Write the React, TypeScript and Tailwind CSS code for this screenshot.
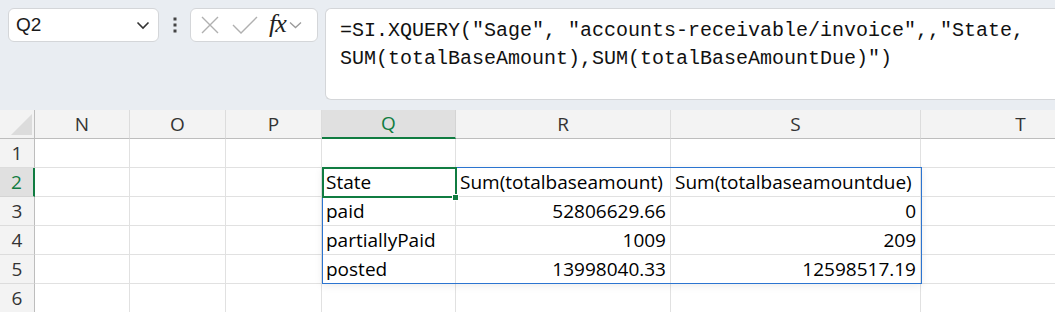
import React from "react";

const cols = [
  { k: "N", w: 95 },
  { k: "O", w: 96 },
  { k: "P", w: 96 },
  { k: "Q", w: 134 },
  { k: "R", w: 215 },
  { k: "S", w: 250 },
  { k: "T", w: 200 },
];

type Cell = { t: string; right?: boolean };
const data: Record<number, Record<string, Cell>> = {
  2: { Q: { t: "State" }, R: { t: "Sum(totalbaseamount)" }, S: { t: "Sum(totalbaseamountdue)" } },
  3: { Q: { t: "paid" }, R: { t: "52806629.66", right: true }, S: { t: "0", right: true } },
  4: { Q: { t: "partiallyPaid" }, R: { t: "1009", right: true }, S: { t: "209", right: true } },
  5: { Q: { t: "posted" }, R: { t: "13998040.33", right: true }, S: { t: "12598517.19", right: true } },
};

const cellFont = { fontFamily: '"Open Sans", "Liberation Sans", sans-serif' };

export default function App() {
  return (
    <div className="w-[1055px] h-[312px] overflow-hidden bg-white" style={cellFont}>
      {/* formula bar */}
      <div className="h-[110px] bg-[#e9edf2] flex items-start pt-[8px] pl-[8px]">
        <div className="w-[151px] h-[34px] bg-white border border-[#d4d6d9] rounded-[6px] flex items-center justify-between pl-[7px] pr-[8px] shrink-0">
          <span className="text-[19px] text-[#1a1a1a]" style={{ fontFamily: '"Liberation Sans", sans-serif' }}>Q2</span>
          <svg width="14" height="9" viewBox="0 0 14 9">
            <path d="M1.5 1.5 L7 7 L12.5 1.5" fill="none" stroke="#333" strokeWidth="1.6" />
          </svg>
        </div>
        <div className="w-[31px] h-[34px] flex items-center justify-center shrink-0">
          <svg width="4" height="16" viewBox="0 0 4 16">
            <rect x="0.5" y="0.5" width="3" height="3" fill="#444" />
            <rect x="0.5" y="6.5" width="3" height="3" fill="#444" />
            <rect x="0.5" y="12.5" width="3" height="3" fill="#444" />
          </svg>
        </div>
        <div className="w-[128px] h-[34px] bg-white border border-[#d4d6d9] rounded-[6px] flex items-center pl-[9px] shrink-0">
          <svg width="20" height="20" viewBox="0 0 20 20" className="mr-[12px]">
            <path d="M2 2 L18 18 M18 2 L2 18" stroke="#b0b0b0" strokeWidth="1.4" fill="none" />
          </svg>
          <svg width="26" height="20" viewBox="0 0 26 20" className="mr-[11px]">
            <path d="M1 10 L9 18 L25 2" stroke="#b0b0b0" strokeWidth="1.4" fill="none" />
          </svg>
          <span
            className="text-[26px] italic text-[#222] leading-none mr-[3px] -mt-[2px] tracking-[-1px]"
            style={{ fontFamily: '"Liberation Serif", "DejaVu Serif", serif' }}
          >
            fx
          </span>
          <svg width="13" height="8" viewBox="0 0 13 8">
            <path d="M1 1.5 L6.5 6.5 L12 1.5" fill="none" stroke="#9a9a9a" strokeWidth="1.3" />
          </svg>
        </div>
        <div className="ml-[7px] h-[92px] flex-1 bg-white border border-[#d4d6d9] border-r-0 rounded-l-[6px] pl-[14px] pt-[8px]">
          <div
            className="text-[20px] leading-[28px] text-[#111] whitespace-pre"
            style={{ fontFamily: '"Liberation Mono", "DejaVu Sans Mono", monospace' }}
          >
            {'=SI.XQUERY("Sage", "accounts-receivable/invoice",,"State,\nSUM(totalBaseAmount),SUM(totalBaseAmountDue)")'}
          </div>
        </div>
      </div>

      {/* grid */}
      <div className="relative">
        {/* header row */}
        <div className="flex h-[29px]">
          <div className="w-[35px] shrink-0 bg-[#f3f3f3] border-b border-r border-[#bdbdbd] relative">
            <svg width="22" height="22" viewBox="0 0 22 22" className="absolute left-[11px] top-[4px]">
              <path d="M21 0 L21 21 L0 21 Z" fill="#dcdcdc" />
            </svg>
          </div>
          {cols.map((c) => {
            const sel = c.k === "Q";
            return (
              <div
                key={c.k}
                style={{ width: c.w }}
                className={
                  sel
                    ? "shrink-0 bg-[#e0e0e0] border-b-2 border-b-[#107c41] border-r border-r-[#d4d4d4] flex items-center justify-center text-[19px] text-[#107c41]"
                    : "shrink-0 bg-[#f3f3f3] border-b border-b-[#bdbdbd] border-r border-r-[#dcdcdc] flex items-center justify-center text-[19px] text-[#333]"
                }
              >
                {c.k}
              </div>
            );
          })}
        </div>
        {[1, 2, 3, 4, 5, 6].map((r) => {
          const sel = r === 2;
          return (
            <div key={r} className="flex h-[29px]">
              <div
                className={
                  sel
                    ? "w-[35px] shrink-0 bg-[#e0e0e0] border-b border-b-[#d4d4d4] border-r-2 border-r-[#107c41] flex items-center justify-center text-[19px] text-[#107c41]"
                    : "w-[35px] shrink-0 bg-[#f3f3f3] border-b border-b-[#dcdcdc] border-r border-r-[#bdbdbd] flex items-center justify-center text-[19px] text-[#333]"
                }
              >
                {r}
              </div>
              {cols.map((c) => {
                const cell = data[r]?.[c.k];
                return (
                  <div
                    key={c.k}
                    style={{ width: c.w }}
                    className={
                      "shrink-0 border-b border-r border-[#e1e1e1] flex items-center px-[4px] text-[19px] text-black whitespace-nowrap overflow-visible " +
                      (cell?.right ? "justify-end" : "justify-start")
                    }
                  >
                    {cell?.t}
                  </div>
                );
              })}
            </div>
          );
        })}

        {/* spill range border */}
        <div className="absolute left-[322px] top-[57px] w-[600px] h-[117px] border border-[#2b74d0] shadow-[0_2px_8px_rgba(0,0,0,0.08)] pointer-events-none" />
        {/* active cell */}
        <div className="absolute left-[322px] top-[57px] w-[135px] h-[31px] border-2 border-[#107c41] pointer-events-none" />
        <div className="absolute left-[452px] top-[84px] w-[7px] h-[7px] bg-[#107c41] border border-white pointer-events-none" />
      </div>
    </div>
  );
}
